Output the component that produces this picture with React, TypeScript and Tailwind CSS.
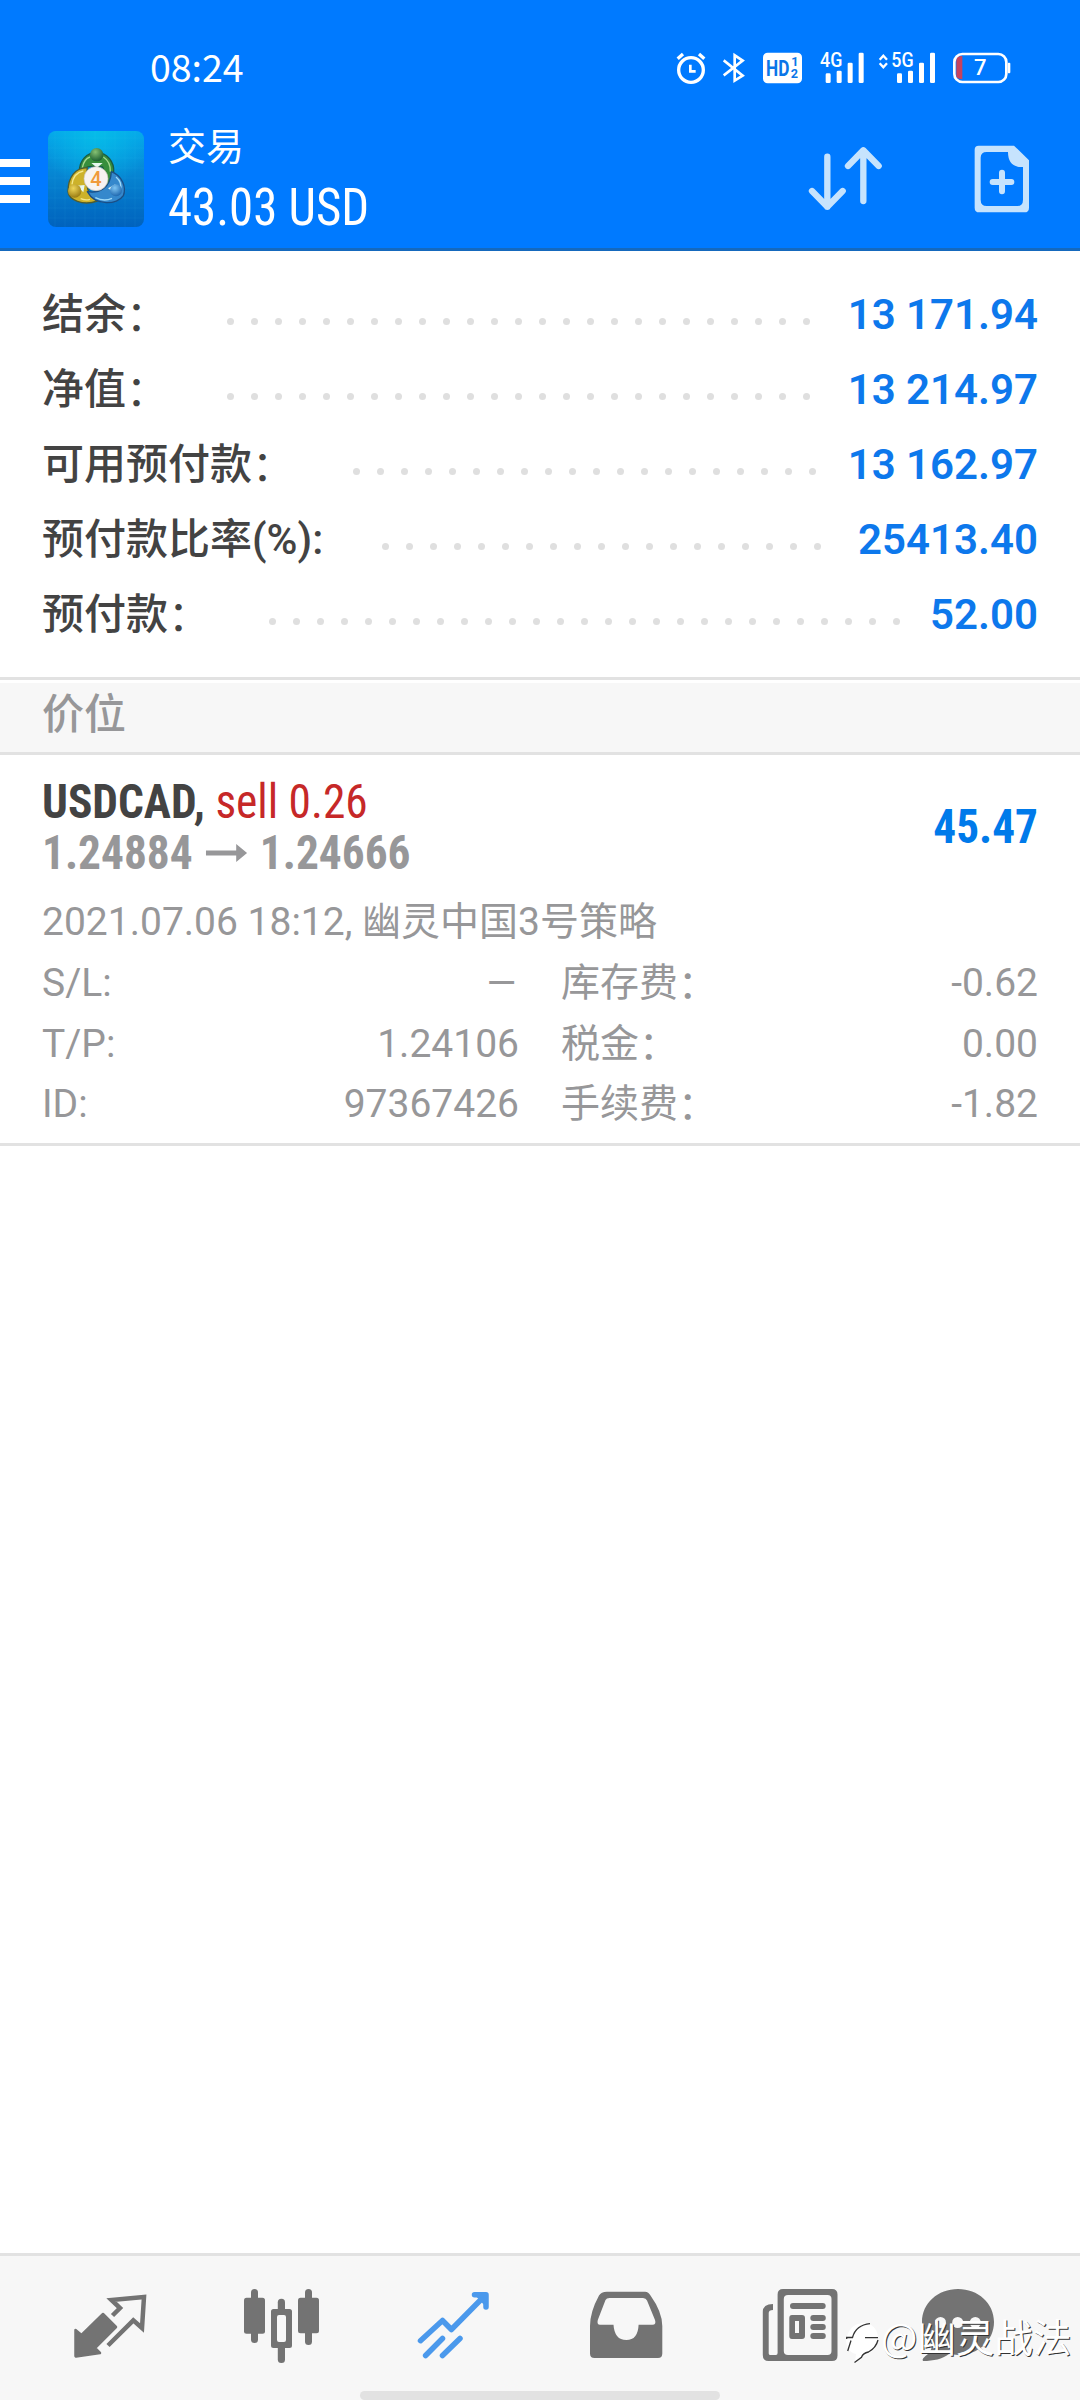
import type { ReactNode } from "react";

type SummaryRow = {
    label: string;
    value: string;
    dots: number;
};

const SUMMARY: SummaryRow[] = [
    { label: "结余：", value: "13 171.94", dots: 25 },
    { label: "净值：", value: "13 214.97", dots: 25 },
    { label: "可用预付款：", value: "13 162.97", dots: 20 },
    { label: "预付款比率(%):", value: "25413.40", dots: 19 },
    { label: "预付款：", value: "52.00", dots: 27 },
];

const DETAILS = [
    { left: "S/L:", leftValue: "–", right: "库存费：", rightValue: "-0.62" },
    { left: "T/P:", leftValue: "1.24106", right: "税金：", rightValue: "0.00" },
    { left: "ID:", leftValue: "97367426", right: "手续费：", rightValue: "-1.82" },
];

// The full-width colon is set lighter and a touch lower than the label before it
function Label({ text }: { text: string }) {
    if (!text.endsWith("：")) return <span>{text}</span>;
    return (
        <span>
            {text.slice(0, -1)}
            <span className="relative top-[2px] font-normal">：</span>
        </span>
    );
}

function AlarmIcon() {
    return (
        <svg width="30" height="32" viewBox="0 0 90 96" fill="none" stroke="#fff" strokeWidth="10">
            <circle cx="45" cy="54" r="37" />
            <path d="M5 20 21 6M85 20 69 6" />
            <path d="M43 38v20h16" strokeWidth="8" />
        </svg>
    );
}

function BluetoothIcon() {
    return (
        <svg width="22" height="32" viewBox="0 0 66 96" fill="none" stroke="#fff" strokeWidth="8">
            <path d="M2 25 59 71 35 86V10L59 26 2 70" />
        </svg>
    );
}

function HdIcon() {
    return (
        <svg width="39" height="32" viewBox="0 0 117 96">
            <rect y="2" width="117" height="92" rx="14" fill="#fff" />
            <g fill="#0a76e8" fontFamily="Roboto" fontWeight="700">
                <text x="9" y="72" fontSize="68" textLength="70" lengthAdjust="spacingAndGlyphs">HD</text>
                <text x="85" y="43" fontSize="38">1</text>
                <text x="83" y="79" fontSize="38">2</text>
            </g>
        </svg>
    );
}

function SignalIcon({ label, data = false }: { label: string; data?: boolean }) {
    const shift = data ? 37 : 0;
    return (
        <svg className="overflow-visible" width={data ? 56 : 44} height="32" viewBox={data ? "0 0 168 96" : "0 0 132 96"}>
            {data && (
                <path d="M2 23 13 11 24 23M2 34 13 46 24 34" fill="none" stroke="#fff" strokeWidth="7" />
            )}
            <g transform={`translate(${shift} 0)`} fill="#fff">
                <text
                    x="0"
                    y="46"
                    fontSize="60"
                    fontFamily="Roboto"
                    fontWeight="500"
                    textLength="67"
                    lengthAdjust="spacingAndGlyphs"
                >
                    {label}
                </text>
                <rect x="17" y="64" width="15" height="29" rx="4" />
                <rect x="50" y="56" width="15" height="37" rx="4" />
                <rect x="83" y="32" width="15" height="61" rx="4" />
                <rect x="116" y="2" width="15" height="91" rx="4" />
            </g>
        </svg>
    );
}

function BatteryIcon() {
    return (
        <svg width="58" height="32" viewBox="0 0 174 96">
            <path d="M10 18Q14 12 28 12V82Q14 80 10 74Z" fill="#c6425f" />
            <rect x="4" y="6" width="156" height="84" rx="24" fill="none" stroke="#fff" strokeWidth="8" />
            <rect x="164" y="32" width="8" height="32" rx="3" fill="#fff" />
            <text x="63" y="70" fontSize="66" fontFamily="Roboto" fontWeight="500" fill="#fff">7</text>
        </svg>
    );
}

function AppLogo() {
    const grid = [21, 51, 81, 111, 141, 171, 201, 231, 261];
    return (
        <svg width="96" height="96" viewBox="0 0 288 288">
            <defs>
                <linearGradient id="tile" x1="0" y1="0" x2="0" y2="1">
                    <stop offset="0" stopColor="#05a5ea" />
                    <stop offset="0.5" stopColor="#0682d0" />
                    <stop offset="1" stopColor="#0062bd" />
                </linearGradient>
                <radialGradient id="shine" cx="0.5" cy="0" r="0.6">
                    <stop offset="0" stopColor="#05bce8" />
                    <stop offset="1" stopColor="#05bce8" stopOpacity="0" />
                </radialGradient>
                <radialGradient id="green" cx="0.4" cy="0.3" r="0.8">
                    <stop offset="0" stopColor="#86c173" />
                    <stop offset="1" stopColor="#0f5228" />
                </radialGradient>
                <radialGradient id="yellow" cx="0.4" cy="0.3" r="0.8">
                    <stop offset="0" stopColor="#efd658" />
                    <stop offset="1" stopColor="#8f700b" />
                </radialGradient>
                <radialGradient id="blue" cx="0.4" cy="0.3" r="0.8">
                    <stop offset="0" stopColor="#7fc5f3" />
                    <stop offset="1" stopColor="#125ba6" />
                </radialGradient>
            </defs>
            <rect width="288" height="288" rx="24" fill="url(#tile)" />
            <rect width="288" height="288" rx="24" fill="url(#shine)" />
            {grid.map((p) => (
                <path key={p} d={`M${p} 0V288M0 ${p}H288`} stroke="#5cd0ff" strokeOpacity="0.1" strokeWidth="2" />
            ))}
            <g strokeWidth="4" strokeLinejoin="round">
                <path
                    d="M94 122C94 88 116 65 146 65C178 65 200 94 197 124C195 148 186 158 176 166L164 108 128 106Q112 108 94 122Z"
                    fill="#378e3c"
                    stroke="#1b5c43"
                />
                <path d="M103 110Q108 84 126 78M166 78Q188 92 187 122" fill="none" stroke="#a5d890" />
                <path
                    d="M118 110C82 110 60 138 60 182C62 206 104 226 148 210C118 196 110 164 118 110Z"
                    fill="#cdb22a"
                    stroke="#4f5d31"
                />
                <path d="M72 160Q76 126 106 120M98 203Q112 209 126 205" fill="none" stroke="#f5e88c" />
                <path
                    d="M118 182C152 188 188 172 190 122C222 134 236 168 226 194C208 222 142 226 118 182Z"
                    fill="#3588cc"
                    stroke="#1a4e86"
                />
                <path d="M204 138Q224 154 217 180M142 200Q168 213 192 202" fill="none" stroke="#9fdaf8" />
            </g>
            <path d="M130 96h34l-17 14zM86 164l24-2-4 22zM180 172l22-12-2 26z" fill="#e6f7ef" />
            <circle cx="146" cy="71" r="20" fill="url(#green)" />
            <circle cx="80" cy="180" r="20" fill="url(#yellow)" />
            <circle cx="204" cy="178" r="18" fill="url(#blue)" />
            <circle cx="144" cy="143" r="36" fill="#f7f3f1" stroke="#c9c4b8" strokeWidth="2" />
            <text x="144" y="165" textAnchor="middle" fontSize="60" fontFamily="Roboto" fontWeight="500" fill="#f09a3a">4</text>
        </svg>
    );
}

function StatusBar() {
    return (
        <div className="flex h-[116px] items-center pl-[150px] pr-[69px] pt-5">
            <span className="-mt-[5px] font-['Noto_Sans_CJK_SC'] text-[37.5px] leading-none text-white">08:24</span>
            <div className="ml-auto flex items-center">
                <AlarmIcon />
                <span className="w-[17px]" />
                <BluetoothIcon />
                <span className="w-[18px]" />
                <HdIcon />
                <span className="w-[18px]" />
                <SignalIcon label="4G" />
                <span className="w-[15px]" />
                <SignalIcon label="5G" data />
                <span className="w-[18px]" />
                <BatteryIcon />
            </div>
        </div>
    );
}

function Header() {
    return (
        <header className="h-[251px] border-b-[3px] border-[#1569bd] bg-[#007aff]">
            <StatusBar />
            <div className="flex h-[126px] items-center">
                <div className="mt-1 flex w-[30px] flex-col gap-2.5">
                    <span className="h-2 bg-white" />
                    <span className="h-2 bg-white" />
                    <span className="h-2 bg-white" />
                </div>
                <div className="ml-[18px]">
                    <AppLogo />
                </div>
                <div className="ml-6 flex flex-col pt-[5px] text-white">
                    <span className="text-[38px] leading-[51px]">交易</span>
                    <span className="origin-left scale-x-[0.958] whitespace-nowrap text-[51px] leading-[69px] font-stretch-75%">
                        43.03 USD
                    </span>
                </div>
                <svg className="ml-auto" width="80" height="70" viewBox="0 0 240 210" fill="none" stroke="#c6e3fd" strokeWidth="19" strokeLinecap="round" strokeLinejoin="round">
                    <path d="M64 38V188M18 141 64 188 110 141" />
                    <path d="M172 171V19M126 66 172 19 218 66" />
                </svg>
                <svg className="ml-[88px] mr-[50px]" width="56" height="68" viewBox="0 0 168 204" fill="#c6e3fd">
                    <path
                        fillRule="evenodd"
                        d="M14 2H120L165 46V188Q165 202 151 202H16Q2 202 2 188V14Q2 2 14 2ZM38 21Q20 21 20 38V164Q20 183 38 183H130Q147 183 147 164V66Q102 68 102 21Z"
                    />
                    <path d="M84 83V139M56 111H112" stroke="#c6e3fd" strokeWidth="18" strokeLinecap="round" />
                </svg>
            </div>
        </header>
    );
}

function Summary() {
    return (
        <section className="h-[429px] border-b-[3px] border-[#e2e2e2] px-[42px] pt-[25px] text-[42px]">
            {SUMMARY.map((row) => (
                <div key={row.label} className="flex h-[75px] items-center">
                    <div className="whitespace-nowrap pt-[2px] font-medium text-[#434343]">
                        <Label text={row.label} />
                    </div>
                    <div className="ml-[50px] mt-4 flex">
                        {Array.from({ length: row.dots }, (_, i) => (
                            <span key={i} className="mx-[8.5px] size-[7px] rounded-full bg-[#dfdfdf]" />
                        ))}
                    </div>
                    <span className="ml-auto whitespace-nowrap pt-[2px] font-semibold text-[#0d78ec]">{row.value}</span>
                </div>
            ))}
        </section>
    );
}

function Position() {
    return (
        <section className="h-[391px] border-b-[3px] border-[#e2e2e2] px-[42px] pt-[13px] text-[39px] text-[#979799]">
            <div className="flex h-[118px] items-center justify-between text-[48px] font-bold font-stretch-75%">
                <div className="origin-left scale-x-[0.945] leading-[51px]">
                    <p className="whitespace-nowrap text-[#434343]">
                        USDCAD, <span className="font-normal text-[#c62828]">sell 0.26</span>
                    </p>
                    <p className="flex items-center whitespace-nowrap">
                        1.24884
                        <svg className="ml-[13px] mr-[13px]" width="45" height="20" viewBox="0 0 44 20" fill="#979799">
                            <path d="M0 7.500H32V1L43.500 10 32 19V12.500H0Z" />
                        </svg>
                        1.24666
                    </p>
                </div>
                <span className="origin-right scale-x-[0.943] text-[#007aea]">45.47</span>
            </div>
            <p className="mt-[5px] h-[62px] whitespace-nowrap leading-[63px]">2021.07.06 18:12, 幽灵中国3号策略</p>
            {DETAILS.map((row) => (
                <div key={row.left} className="flex h-[60.5px] items-center whitespace-nowrap">
                    <span>{row.left}</span>
                    <span className={row.leftValue === "–" ? "ml-auto origin-right scale-x-[1.3]" : "ml-auto"}>
                        {row.leftValue}
                    </span>
                    <div className="ml-[42px] flex w-[477px] justify-between">
                        <Label text={row.right} />
                        <span>{row.rightValue}</span>
                    </div>
                </div>
            ))}
        </section>
    );
}

function TabIcon({ children }: { children: ReactNode }) {
    return (
        <svg className="shrink-0" width="84" height="84" viewBox="0 0 84 84" fill="#737373">
            {children}
        </svg>
    );
}

function TabBar() {
    return (
        <nav className="relative flex h-[147px] gap-[88px] border-t-[3px] border-[#e2e2e2] bg-[#f7f7f7] pl-[68px] pt-7">
            {/* Quotes */}
            <TabIcon>
                <path d="M35 30 48 43 27 64 32 69 8 72.500 7.500 72V46L13.500 51Z" stroke="#737373" strokeWidth="2.500" strokeLinejoin="round" />
                <path d="M44.500 31.500 52 24 43.500 16 76 13 74 44 65.300 36.300 40 61.500" fill="none" stroke="#737373" strokeWidth="4.500" />
            </TabIcon>
            {/* Chart */}
            <TabIcon>
                <rect x="4" y="13.700" width="21" height="36" rx="2.500" />
                <rect x="11" y="5" width="7" height="54" rx="3.500" />
                <rect x="37.800" y="14.700" width="7.200" height="16" rx="3.500" />
                <rect x="37.800" y="60" width="7.200" height="19" rx="3.500" />
                <path fillRule="evenodd" d="M33.500 25H49.500Q52 25 52 27.500V61.500Q52 64 49.500 64H33.500Q31 64 31 61.500V27.500Q31 25 33.500 25ZM39 31Q37 31 37 33V56Q37 58 39 58H44Q46 58 46 56V33Q46 31 44 31Z" />
                <rect x="58" y="13.700" width="21" height="35.500" rx="2.500" />
                <rect x="65" y="5" width="7" height="56" rx="3.500" />
            </TabIcon>
            {/* Trade, the open tab */}
            <TabIcon>
                <g fill="none" stroke="#4b99ec" strokeWidth="5.500" strokeLinecap="round" strokeLinejoin="round">
                    <path d="M8.500 56.700 30.500 36.500 39.400 45.500 73 11.500" />
                    <path d="M62.500 10.700H74V23" fill="#4b99ec" />
                    <path d="M13.600 71.500 30.500 54.500M30.500 71.500 48 54.500" />
                </g>
            </TabIcon>
            {/* History */}
            <div className="ml-px">
                <TabIcon>
                    <path
                        fillRule="evenodd"
                        d="M22 7.700H60Q63.500 7.700 65.500 11.500Q77.300 28 77.300 42V69.500Q77.300 74 73 74H9.500Q5 74 5 69.500V42Q5 28 14 11.500Q16 7.700 22 7.700ZM24.500 14Q21.500 14 20.500 16L12.800 36Q11.600 40.700 15 40.700H28.500Q29.500 56 41.300 56Q53 56 53.600 40.700H67.500Q71.500 40.700 70 36L62 16.500Q61 14 58 14Z"
                    />
                </TabIcon>
            </div>
            {/* News */}
            <div className="ml-px">
                <TabIcon>
                    <path
                        fillRule="evenodd"
                        d="M25 5H74Q79.500 5 79.500 10.500V71.500Q79.500 77 74 77H10.500Q4.800 77 4.800 71V28Q4.800 20 15 20V26Q10.700 26 10.700 29V69.500Q10.700 71 12.500 71H18Q19.600 71 19.600 69V10.500Q19.600 5 25 5ZM30 11Q25.800 11 25.800 15V67Q25.800 71 30 71H69.500Q73.500 71 73.500 67V15Q73.500 11 69.500 11Z"
                    />
                    <rect x="32" y="19" width="35.700" height="6" rx="3" />
                    <path fillRule="evenodd" d="M34 31H44Q47 31 47 34V52Q47 55 44 55H34Q31.300 55 31.300 52V34Q31.300 31 34 31ZM37 37V49H41V37Z" />
                    <rect x="52.300" y="31" width="15.500" height="6" rx="3" />
                    <rect x="52.300" y="40" width="15.500" height="6" rx="3" />
                    <rect x="52.300" y="49" width="15.500" height="6" rx="3" />
                </TabIcon>
            </div>
            {/* Chat */}
            <div className="-ml-[14px]">
                <TabIcon>
                    <path d="M42 5C62 5 78 19 78 38S62 71 42 71L33 70C26 75 18 77 7 77Q5 75 12 70Q17 65 15 60Q6 50 6 38C6 19 22 5 42 5Z" />
                    <g fill="#f7f7f7">
                        <circle cx="24.500" cy="38.500" r="5.500" />
                        <circle cx="41.700" cy="38.500" r="5.500" />
                        <circle cx="59.300" cy="38.500" r="5.500" />
                    </g>
                </TabIcon>
            </div>
            <Watermark />
            <div className="absolute bottom-0 left-[360px] h-[9px] w-[360px] rounded-full bg-[#e2e2e2]" />
        </nav>
    );
}

function Watermark() {
    return (
        <div className="absolute left-[845px] top-[56px] flex items-start">
            <svg className="mt-[7px]" width="36" height="46" viewBox="0 0 36 46" fill="none">
                <path d="M17 4C27 3 34 11 33 21C32 32 24 34 17 38L10 43 11 35C4 34 -1 25 2 17Q6 5 17 4Z" fill="#fff" />
                <path d="M1.700 20V18.500H7.500Q11 6 25 4.700M6 21.500 2.700 32M20 18.700H33M33 21Q31 29 23.500 33Q18 34 16.500 38.300L9.500 43.500" stroke="#333" strokeWidth="1.300" />
            </svg>
            <span className="whitespace-nowrap font-['Noto_Sans_CJK_SC'] text-[38.5px] leading-[46px] text-white [text-shadow:1px_1px_0px_#333]">
                @幽灵战法
            </span>
        </div>
    );
}

export default function App() {
    return (
        <main className="flex h-[2400px] w-[1080px] flex-col overflow-hidden bg-white font-[Roboto,'Noto_Sans_CJK_SC',sans-serif]">
            <Header />
            <Summary />
            <div className="mt-[3px] flex h-[72px] items-center border-b-[3px] border-[#e2e2e2] bg-[#f7f7f7] px-[42px] pb-1.5 text-[42px] font-medium text-[#979799]">
                价位
            </div>
            <Position />
            <div className="flex-1" />
            <TabBar />
        </main>
    );
}
